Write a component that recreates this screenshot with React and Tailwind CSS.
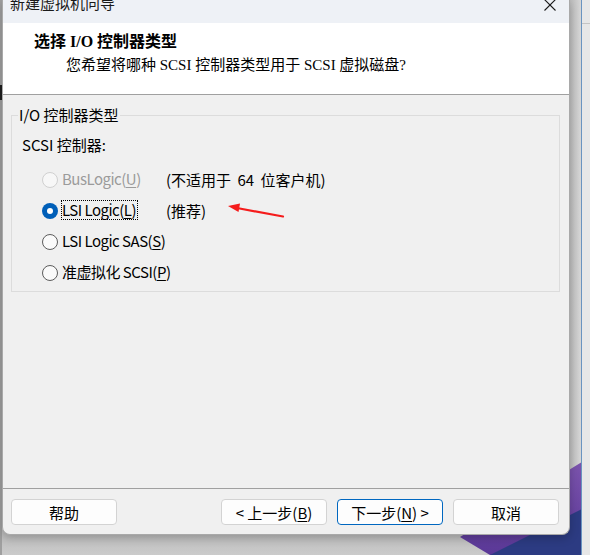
import React from 'react';

const ui = "font-['Noto_Sans_CJK_SC',sans-serif]";
const serif = "font-['Liberation_Serif','Noto_Sans_CJK_SC',serif]";

const controllers = [
  { label: 'BusLogic', key: 'U', note: '(不适用于 64 位客户机)', state: 'disabled' },
  { label: 'LSI Logic', key: 'L', note: '(推荐)', state: 'checked', focus: true },
  { label: 'LSI Logic SAS', key: 'S', state: 'idle' },
  { label: '准虚拟化 SCSI', key: 'P', state: 'idle' },
];

const Radio = ({ state }) => {
  if (state === 'checked') {
    return (
      <span className="w-4 h-4 shrink-0 rounded-full bg-[#005fb8] flex items-center justify-center">
        <span className="w-[6px] h-[6px] rounded-full bg-white" />
      </span>
    );
  }
  if (state === 'disabled') {
    return <span className="block w-4 h-4 shrink-0 rounded-full border border-[#d0d0d0] bg-[#f7f7f7]" />;
  }
  return <span className="block w-4 h-4 shrink-0 rounded-full border border-[#5c5c5c] bg-[#fafafa]" />;
};

const Button = ({ children, primary }) => (
  <button
    type="button"
    className={
      'h-[26px] w-[106px] rounded-[4px] border bg-[#fdfdfd] text-[15px] leading-none text-black whitespace-nowrap ' +
      (primary ? 'border-[#0067c0]' : 'border-[#d3d3d3]')
    }
  >
    {children}
  </button>
);

// desktop behind the dialog (other window edge + wallpaper corner)
const Backdrop = () => (
  <svg className="absolute inset-0" width="590" height="555">
    <defs>
      <linearGradient id="strip" x1="0" x2="1" y1="0" y2="0">
        <stop offset="0" stopColor="#bcbcbc" />
        <stop offset="1" stopColor="#d8d8d8" />
      </linearGradient>
      <linearGradient id="purple" x1="0" x2="0" y1="0" y2="1">
        <stop offset="0" stopColor="#7d55ae" />
        <stop offset="1" stopColor="#5a3897" />
      </linearGradient>
      <linearGradient id="under" x1="0" x2="0" y1="0" y2="1">
        <stop offset="0" stopColor="#b9b9b9" />
        <stop offset="1" stopColor="#cbcbcb" />
      </linearGradient>
    </defs>
    <rect width="590" height="555" fill="#c9c9c9" />
    <rect x="0" y="530" width="590" height="25" fill="url(#under)" />
    <rect x="0" y="0" width="2" height="555" fill="#9f9f9f" />
    <rect x="0" y="85" width="2" height="15" fill="#1e1e1e" />
    <rect x="570" y="0" width="12" height="555" fill="url(#strip)" />
    <polygon points="460,537 590,457 590,555 490,555" fill="url(#purple)" />
    <polygon points="490,555 590,505 590,555" fill="#2c3b82" />
    <rect x="581" y="0" width="1" height="555" fill="#6a94c0" />
    <rect x="582" y="0" width="8" height="555" fill="#e7e7e7" />
    <rect x="582" y="23" width="8" height="1" fill="#c4c4c4" />
  </svg>
);

const App = () => {
  return (
    <div className={`relative w-[590px] h-[555px] overflow-hidden ${ui}`}>
      <Backdrop />

      <div className="relative ml-[2px] w-[568px] h-[535px] flex flex-col bg-[#f0f0f0] border-x border-b border-[#a9a9a9] rounded-b-[8px] overflow-hidden shadow-[0_3px_10px_rgba(0,0,0,0.22)]">
        {/* title bar, scrolled partly off the top */}
        <div className="h-[23px] shrink-0 bg-[#eef1f6] flex justify-between overflow-hidden pl-[7px] pr-[13px]">
          <span className="-mt-[7px] text-[15px] leading-[20px] text-[#1a1a1a]">新建虚拟机向导</span>
          <svg width="12" height="12" viewBox="0 0 12 12" className="-mt-[1px]">
            <path d="M0.5 0.5 L11.5 11.5 M11.5 0.5 L0.5 11.5" stroke="#1a1a1a" strokeWidth="1.1" />
          </svg>
        </div>

        {/* page header */}
        <div className="h-[72px] shrink-0 bg-white border-b border-[#a0a0a0] pt-[9px]">
          <div className={`pl-[31px] text-[16px] leading-[20px] font-bold text-black ${serif}`}>
            选择 I/O 控制器类型
          </div>
          <div className={`pl-[63px] mt-[3px] text-[15px] leading-[20px] text-black ${serif}`}>
            您希望将哪种 SCSI 控制器类型用于 SCSI 虚拟磁盘?
          </div>
        </div>

        {/* body */}
        <div className="flex-1 pt-[10px] pl-[8px]">
          <fieldset className="w-[549px] border border-[#dcdcdc]">
            <legend className="ml-[6px] px-[1px] text-[15px] leading-[20px] text-black">I/O 控制器类型</legend>
            <div className="pl-[10px] pt-[10px] pb-[3px] text-[15px] text-black">
              <div className="leading-[20px]">SCSI 控制器:</div>
              <div className="mt-[9px] flex flex-col">
                {controllers.map((c) => (
                  <div key={c.key} className="h-[31px] flex items-center whitespace-nowrap">
                    <span className="ml-[20px] shrink-0">
                      <Radio state={c.state} />
                    </span>
                    <span className="ml-[3px] w-[105px] shrink-0">
                      <span
                        className={
                          'inline-block leading-[18px] pr-[1px] border tracking-[-0.5px] ' +
                          (c.focus ? 'border-dotted border-black ' : 'border-transparent ') +
                          (c.state === 'disabled' ? 'text-[#9b9b9b]' : 'text-black')
                        }
                      >
                        {c.label}(<u className="underline-offset-2">{c.key}</u>)
                      </span>
                    </span>
                    {c.note && <span className="leading-[20px] [word-spacing:3px]">{c.note}</span>}
                  </div>
                ))}
              </div>
            </div>
          </fieldset>
        </div>

        {/* footer buttons */}
        <div className="shrink-0 border-t border-[#a0a0a0] pt-[10px] pb-[9px] pl-[8px] pr-[10px] flex justify-between">
          <Button>帮助</Button>
          <div className="flex gap-[10px]">
            <Button>
              &lt; 上一步(<u className="underline-offset-2">B</u>)
            </Button>
            <Button primary>
              下一步(<u className="underline-offset-2">N</u>) &gt;
            </Button>
            <Button>取消</Button>
          </div>
        </div>
      </div>

      {/* red annotation arrow */}
      <svg className="absolute inset-0 pointer-events-none" width="590" height="555">
        <path d="M283 216.5 L237 208" stroke="#f51c1c" strokeWidth="2.2" strokeLinecap="round" />
        <polygon points="228,206 240,203.5 238.5,212" fill="#f51c1c" />
      </svg>
    </div>
  );
};

export default App;
